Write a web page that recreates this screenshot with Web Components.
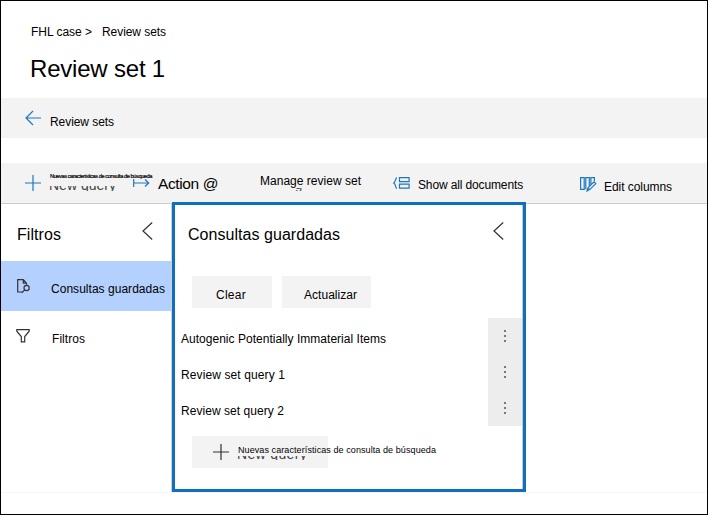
<!DOCTYPE html>
<html lang="es"><head><meta charset="utf-8"><title>Review set 1</title>
<style>
html,body{margin:0;background:#fff}
body{font-family:"Liberation Sans",Arial,sans-serif;color:#000}
</style></head><body>
<review-app></review-app>
<script>
const define=(name,html,setup)=>{
  const t=document.createElement('template');t.innerHTML=html;
  customElements.define(name,class extends HTMLElement{
    constructor(){super();this.attachShadow({mode:'open'}).append(t.content.cloneNode(true));}
    connectedCallback(){if(setup)setup(this,this.shadowRoot);}
  });
};

/* One line of text, tracked so that it fills the width in "w". */
define('fit-text',`<style>:host{display:block;flex:none;white-space:pre;line-height:16px;font-size:12px}span{display:inline-block}</style><span><slot></slot></span>`,(el,root)=>{
  const s=root.querySelector('span'),w=+el.getAttribute('w'),size=el.getAttribute('size');
  if(size)el.style.fontSize=size+'px';
  el.style.width=w+'px';
  s.style.letterSpacing=((w-s.getBoundingClientRect().width)/el.textContent.length)+'px';
});

const icons={
  back:[16,16,'<path d="M16 8H1M8 1L1 8l7 7"/>'],
  plus:[16,16,'<path d="M8 0v16M0 8h16"/>'],
  action:[17,8,'<path d="M.7 0v8M1 4h15M12 .5L15.7 4 12 7.5"/>'],
  docs:[17,12,'<path d="M4 .6C2.3.6 3 4.5.8 6 3 7.5 2.3 11.400 4 11.400M6.500.7h9.600v4H6.500zM6.500 7.100h9.600v4H6.500z"/>'],
  columns:[17,15,'<path d="M.6.6h3.600v11.700H.6zM5.800 12.300V.6h3.500v9M10.900 8V.6h3.500v3.500M7 13.800l1-3 6-6 1.800 1.800-6 6zM8 10.800l1.800 1.800"/>'],
  left:[11,18,'<path d="M10.200.5L1 9l9.200 8.500"/>'],
  saved:[14,15,'<path d="M5.500 13H.7V.7h5.600l3.200 3.500v1.600M6.300.7v3.500h3.200"/><circle cx="9.600" cy="9" r="2.600"/><path d="M7.700 10.800L4.800 13.800"/>'],
  filter:[14,14,'<path d="M.8.7h12.400v1.500L8.700 7.500v5.300H5.300V7.500L.8 2.200z"/>'],
  more:[2,12,'<path d="M1 0v2M1 5v2M1 10v2" stroke-width="2"/>']
};
define('line-icon','<style>:host{display:block;flex:none;color:#1d76c0}svg{display:block;overflow:visible;fill:none;stroke:currentColor;stroke-width:1.2}</style><div></div>',(el,root)=>{
  const [w,h,d]=icons[el.getAttribute('name')];
  root.querySelector('div').innerHTML=`<svg width="${w}" height="${h}" viewBox="0 0 ${w} ${h}">${d}</svg>`;
});

/* Lower part of a label that is partly hidden under another one. */
define('cut-label',`<style>:host{display:flex;align-items:flex-end;overflow:hidden;position:absolute;color:#444}</style><slot></slot>`);

define('page-header',`<style>:host{display:block;height:97px;box-sizing:border-box;padding:23px 0 0 30px}
.crumbs{display:flex;gap:10px}.title{line-height:28px;margin:15px 0 0 -1px}</style>
<div class="crumbs"><fit-text w="61">FHL case &gt;</fit-text><fit-text w="64">Review sets</fit-text></div>
<fit-text class="title" w="135" size="24">Review set 1</fit-text>`);

define('back-bar',`<style>:host{display:flex;height:40px;box-sizing:border-box;background:#f3f3f3;padding:12px 0 0 24px;gap:9px}fit-text{margin-top:4px}</style>
<line-icon name="back"></line-icon><fit-text w="64">Review sets</fit-text>`);

define('tool-bar',`<style>:host{display:grid;grid-template-columns:49px 83px 25px 102px 133px 25px 162px 24px 1fr;position:relative;height:41px;box-sizing:border-box;background:#f3f3f3;border-bottom:1px solid #ccc;margin-top:25px;align-items:start}
line-icon{justify-self:start}.tiny{-webkit-text-stroke:.2px #000;line-height:8px;margin-top:9px}
.c1{left:48px;top:23px;height:5px;width:68px}.c1 fit-text{margin-bottom:-2px}
.c2{left:294px;top:25px;width:12px;height:3px}.c2 fit-text{margin-bottom:-2px}
.action{line-height:20px;margin-top:11px}</style>
<line-icon name="plus" style="margin:12px 0 0 24px"></line-icon>
<fit-text class="tiny" w="102" size="5.7">Nuevas características de consulta de búsqueda</fit-text>
<line-icon name="action" style="margin-top:16px"></line-icon>
<fit-text class="action" w="60" size="15.5">Action @</fit-text>
<fit-text w="101" style="margin-top:10px">Manage review set</fit-text>
<line-icon name="docs" style="margin-top:14px"></line-icon>
<fit-text w="105" style="margin-top:14px">Show all documents</fit-text>
<line-icon name="columns" style="margin-top:14px"></line-icon>
<fit-text w="68" style="margin-top:16px">Edit columns</fit-text>
<cut-label class="c1"><fit-text w="67" size="14">New query</fit-text></cut-label>
<cut-label class="c2"><fit-text w="8" size="13">g</fit-text></cut-label>`);

define('nav-item',`<style>:host{display:grid;grid-template-columns:34px 1fr;height:50px;box-sizing:border-box;padding:18px 0 0 15px}
:host([selected]){background:#b3d0ff}</style><slot name="icon"></slot><slot></slot>`);

define('side-nav',`<style>:host{display:block;width:171px;box-sizing:border-box;border-right:1px solid #d2d2d2}
header{display:flex;justify-content:space-between;height:57px;box-sizing:border-box;padding:18px 18px 0 16px}
line-icon{color:#333}.t{line-height:20px;margin-top:3px}</style>
<header><fit-text class="t" w="44" size="16">Filtros</fit-text><line-icon name="left"></line-icon></header>
<nav-item selected><line-icon slot="icon" name="saved" style="margin:0 0 0 1px"></line-icon><fit-text w="114" style="margin:2px 0 0 1px">Consultas guardadas</fit-text></nav-item>
<nav-item><line-icon slot="icon" name="filter"></line-icon><fit-text w="33" style="margin:2px 0 0 2px">Filtros</fit-text></nav-item>`);

define('soft-button',`<style>:host{display:flex;position:relative;height:32px;box-sizing:border-box;background:#f3f3f3}</style><slot></slot>`);

define('query-row',`<style>:host{display:flex;justify-content:space-between;height:36px;padding-left:6px}
i{display:flex;justify-content:center;width:34px;box-sizing:border-box;padding-top:12px;background:#ededed}line-icon{color:#777}
::slotted(*){margin-top:13px}</style><slot></slot><i><line-icon name="more"></line-icon></i>`);

define('saved-queries',`<style>:host{display:block;position:relative;z-index:1;width:354px;height:290px;box-sizing:border-box;margin-top:-2px;border:3px solid #106ebe}
main{height:284px;box-sizing:border-box;border-right:1px solid #c8c8c8}
header{display:flex;justify-content:space-between;padding:17px 18px 0 13px;height:71px;box-sizing:border-box}
header fit-text{line-height:20px;margin-top:3px}header line-icon,.new line-icon{color:#333}
.actions{display:flex;gap:10px;padding-left:17px;height:42px}
.new{margin:10px 0 0 17px;width:136px}
.cut{left:45px;top:20px;height:4px;width:72px}.cut fit-text{margin-bottom:-2px}</style>
<main><header><fit-text w="152" size="16">Consultas guardadas</fit-text><line-icon name="left"></line-icon></header>
<div class="actions"><soft-button style="width:80px;padding:11px 0 0 24px"><fit-text w="30">Clear</fit-text></soft-button>
<soft-button style="width:89px;padding:11px 0 0 22px"><fit-text w="53">Actualizar</fit-text></soft-button></div>
<query-row><fit-text w="205">Autogenic Potentially Immaterial Items</fit-text></query-row>
<query-row><fit-text w="104">Review set query 1</fit-text></query-row>
<query-row><fit-text w="103">Review set query 2</fit-text></query-row>
<soft-button class="new"><line-icon name="plus" style="margin:8px 0 0 21px"></line-icon><fit-text w="198" size="9" style="margin:6px 0 0 9px">Nuevas características de consulta de búsqueda</fit-text>
<cut-label class="cut"><fit-text w="70" size="14">New query</fit-text></cut-label></soft-button></main>`);

define('review-app',`<style>:host{display:flex;flex-direction:column;width:708px;height:515px;box-sizing:border-box;border:1px solid #000;background:#fff;overflow:hidden}
.body{display:flex;height:288px;border-bottom:1px solid #f6f6f6}</style>
<page-header></page-header><back-bar></back-bar><tool-bar></tool-bar>
<div class="body"><side-nav></side-nav><saved-queries></saved-queries></div>`);
</script></body></html>
